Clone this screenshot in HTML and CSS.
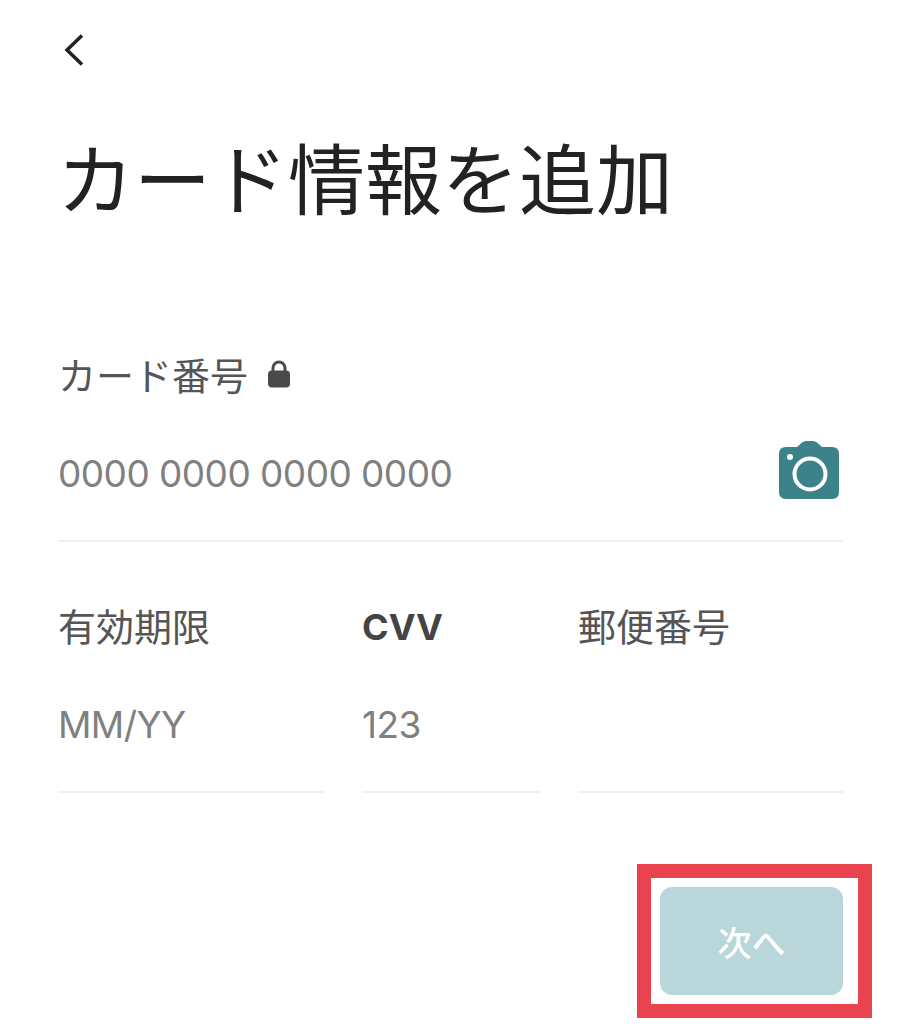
FILE: index.html
```html
<!DOCTYPE html>
<html lang="ja">
<head>
<meta charset="utf-8">
<title>カード情報を追加</title>
<link rel="stylesheet" href="styles.css">
</head>
<body>
<main class="page">
  <button class="back" aria-label="戻る">
    <svg width="24" height="34" viewBox="0 0 24 34"><path d="M19 2.500 4 17l15 14.500" fill="none" stroke="#222" stroke-width="3.500"/></svg>
  </button>
  <h1 class="title">カード情報を追加</h1>
  <div class="label-row">
    <span class="label">カード番号</span>
    <svg class="lock" width="24" height="30" viewBox="0 0 24 30"><path d="M6 13V9a6 6 0 0 1 12 0v4" fill="none" stroke="#4a4a4a" stroke-width="3"/><rect x="1" y="11.500" width="22" height="17" rx="4" fill="#4a4a4a"/></svg>
  </div>
  <div class="field card-field">
    <span class="placeholder">0000 0000 0000 0000</span>
    <svg class="camera" width="60" height="58" viewBox="0 0 60 58"><path d="M7 6h11l5-4.500q2-1.500 4-1.500h7q2 0 4 1.500L43 6h10q7 0 7 7v38q0 7-7 7H7q-7 0-7-7V13q0-7 7-7Z" fill="#3c828a"/><circle cx="31" cy="33" r="15.500" fill="none" stroke="#fff" stroke-width="4"/><circle cx="11" cy="16" r="3" fill="#fff"/></svg>
  </div>
  <div class="grid">
    <div class="col">
      <div class="label">有効期限</div>
      <div class="field small"><span class="placeholder">MM/YY</span></div>
    </div>
    <div class="col">
      <div class="label bold">CVV</div>
      <div class="field small"><span class="placeholder">123</span></div>
    </div>
    <div class="col">
      <div class="label">郵便番号</div>
      <div class="field small"></div>
    </div>
  </div>
  <div class="actions">
    <button class="next">次へ</button>
    <span class="highlight"></span>
  </div>
</main>
</body>
</html>
```

FILE: styles.css
```css
* { box-sizing: border-box; }
html, body { margin: 0; height: 100%; background: #fff; }
body { font-family: "Noto Sans CJK JP", "Noto Sans", sans-serif; overflow: hidden; }
.page { padding: 33px 57px 0 58px; }
.back { display: block; padding: 0; margin: 0 0 0 5px; border: 0; background: none; height: 34px; }
.back svg { display: block; }
.title { margin: 54px 0 0 -1px; font-size: 77px; line-height: 110px; font-weight: 400; color: #222; white-space: nowrap; }
.label-row { display: flex; align-items: center; gap: 19px; margin-top: 117px; height: 52px; }
.lock { display: block; }
.label { font-size: 38px; line-height: 52px; height: 52px; color: #555; white-space: nowrap; }
.bold { font-family: "Inter", sans-serif; font-size: 36px; line-height: 56px; font-weight: 700; color: #444; }
.field { display: flex; align-items: center; justify-content: space-between; border-bottom: 2px solid #efefef; }
.card-field { height: 142px; padding: 6px 4px 0 0; }
.placeholder { font-family: "Inter", sans-serif; font-size: 37px; font-weight: 400; letter-spacing: -0.55px; color: #808080; white-space: nowrap; }
.camera { display: block; margin-top: -6px; }
.grid { display: grid; grid-template-columns: 266px 178px 265px; column-gap: 38px; margin-top: 57px; }
.small { height: 142px; padding-top: 6px; }
.actions { position: relative; display: flex; justify-content: flex-end; margin-top: 94px; }
.next { width: 183px; height: 108px; border: 0; border-radius: 12px; background: #b9d7da; color: #fff; font-family: inherit; font-size: 34px; font-weight: 500; }
.highlight { position: absolute; top: -23px; right: -29px; width: 235px; height: 154px; border: 14px solid #e8434f; }
```
